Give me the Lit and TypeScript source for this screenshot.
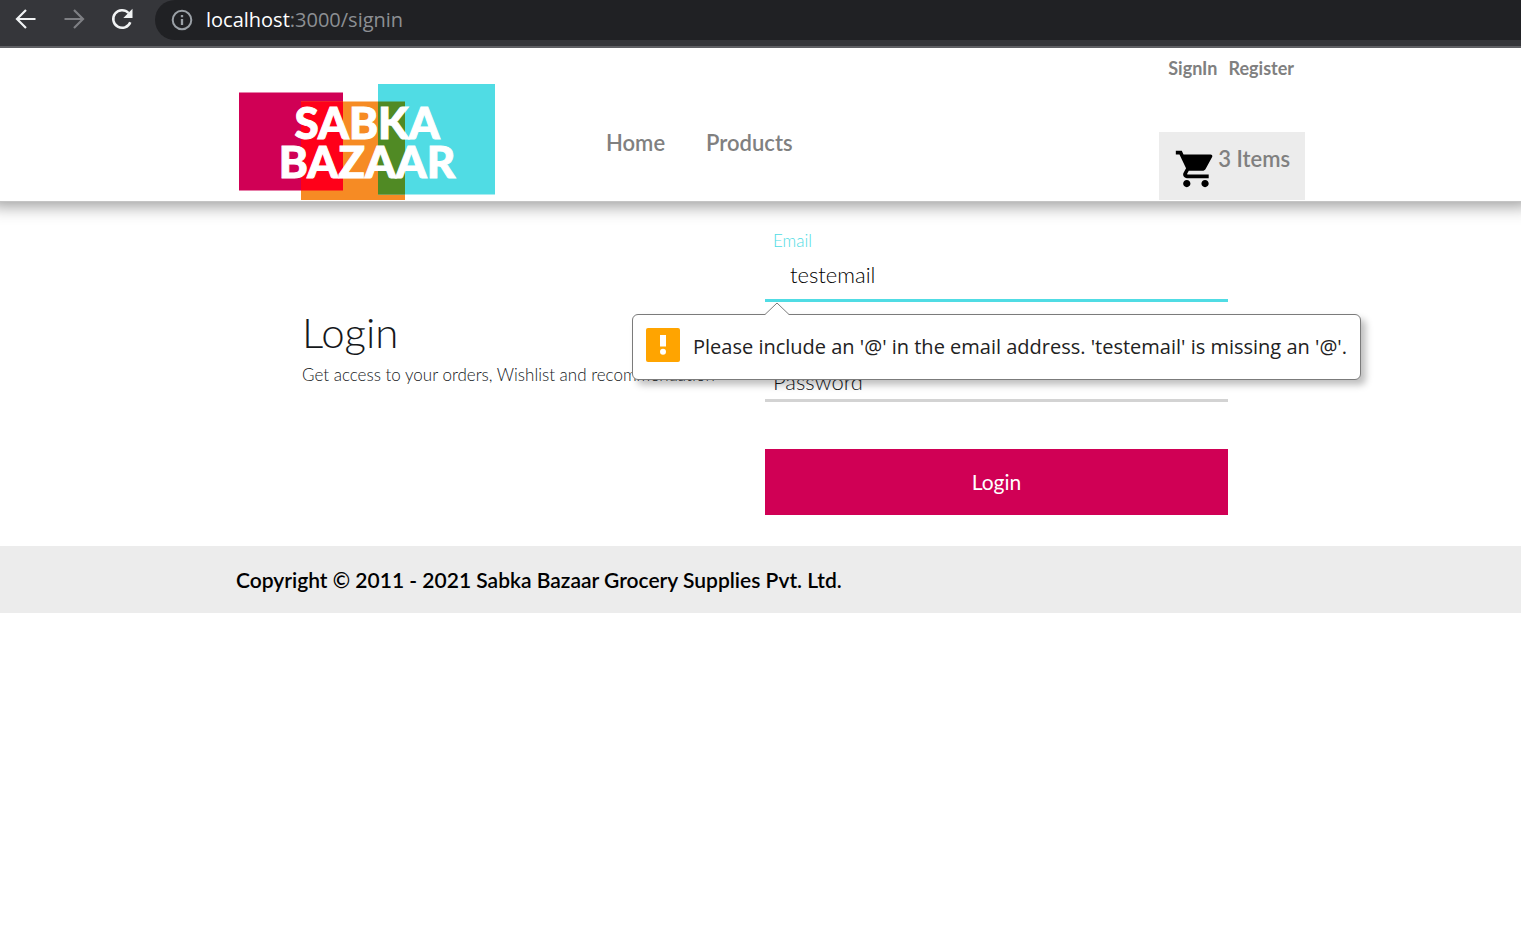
import { LitElement, html, css } from "lit";
import { customElement } from "lit/decorators.js";

@customElement("browser-bar")
class BrowserBar extends LitElement {
  static styles = css`
    :host {
      display: flex;
      align-items: flex-start;
      position: relative;
      z-index: 2;
      height: 46px;
      background: #35363a;
      border-bottom: 2px solid #5f6064;
      font-family: "Open Sans", "Noto Sans", sans-serif;
    }
    nav {
      display: flex;
      gap: 20px;
      padding: 5px 19px 0 12px;
    }
    button {
      width: 28px;
      height: 28px;
      padding: 0;
      border: 0;
      background: none;
      color: #f1f3f4;
    }
    button:disabled {
      color: #7e7f83;
    }
    svg {
      display: block;
    }
    .address {
      flex: 1;
      display: flex;
      align-items: center;
      gap: 13px;
      height: 40px;
      box-sizing: border-box;
      padding-left: 16px;
      border-radius: 20px 0 0 20px;
      background: #202124;
      color: #9aa0a6;
      font-size: 20px;
      line-height: 28px;
    }
    .host {
      color: #fff;
    }
    .path {
      color: #8c8f93;
    }
  `;
  render() {
    return html`
      <nav aria-label="Browser">
        <button aria-label="Back">
          <svg width="28" height="28" viewBox="0 0 28 28" fill="none" stroke="currentColor" stroke-width="2.2">
            <path d="M23.500 14H5.500M14 5L5 14l9 9" />
          </svg>
        </button>
        <button aria-label="Forward" disabled>
          <svg width="28" height="28" viewBox="0 0 28 28" fill="none" stroke="currentColor" stroke-width="2.2">
            <path d="M4.500 14h18M14 5l9 9-9 9" />
          </svg>
        </button>
        <button aria-label="Reload">
          <svg width="28" height="28" viewBox="0 0 28 28" fill="none" stroke="currentColor" stroke-width="2.5">
            <path d="M22.300 17.200A8.800 8.800 0 1 1 20.500 8" />
            <path d="M24.500 3.800v9.200h-9.200z" fill="currentColor" stroke="none" />
          </svg>
        </button>
      </nav>
      <div class="address">
        <svg width="22" height="22" viewBox="0 0 22 22" fill="none" stroke="currentColor" stroke-width="2">
          <circle cx="11" cy="11" r="9.300" />
          <path d="M11 10v6M11 6v2.300" stroke-width="2.300" />
        </svg>
        <span><span class="host">localhost</span><span class="path">:3000/signin</span></span>
      </div>
    `;
  }
}

@customElement("site-header")
class SiteHeader extends LitElement {
  static styles = css`
    :host {
      display: flex;
      justify-content: space-between;
      position: relative;
      height: 153px;
      padding: 0 216px 0 239px;
      background: #fff;
      border-bottom: 1px solid #c4c4c4;
      box-shadow: 0 -6px 16px 10px rgba(0, 0, 0, 0.4);
    }
    a {
      color: #808080;
      text-decoration: none;
    }
    .start {
      display: flex;
      gap: 111px;
    }
    .logo {
      margin-top: 36px;
    }
    .logo svg,
    .cart svg {
      display: block;
    }
    .logo text {
      font: 900 44px/1 Lato, sans-serif;
      fill: #fff;
      stroke: #fff;
      stroke-width: 1px;
    }
    .menu {
      display: flex;
      gap: 41px;
      padding-top: 80px;
      font-size: 22px;
      line-height: 30px;
      font-weight: 600;
    }
    .end {
      display: flex;
      flex-direction: column;
      justify-content: space-between;
      align-items: flex-end;
      padding-bottom: 1px;
    }
    .account {
      display: flex;
      gap: 11px;
      padding: 8px 11px 0 0;
      font-size: 18px;
      line-height: 24px;
      font-weight: 700;
    }
    .cart {
      display: flex;
      gap: 2px;
      height: 68px;
      box-sizing: border-box;
      padding: 12px 15px 0;
      border: 0;
      background: #ececec;
      color: #808080;
      font: 600 22px/30px Lato, sans-serif;
      white-space: nowrap;
    }
  `;
  render() {
    return html`
      <div class="start">
        <a class="logo" href="#" aria-label="Sabka Bazaar">
          <svg width="256" height="116" viewBox="0 0 256 116">
            <path fill="#d00055" d="M0 8.500h104V106.500H0z" />
            <path fill="#f68b24" d="M62 17.500h104V116H62z" />
            <path fill="#50dce4" d="M139 0h117v110.500H139z" />
            <path fill="#ff0019" d="M62 17.500h42V106.500H62z" />
            <path fill="#508a24" d="M139 17.500h27v93h-27z" />
            <text x="128" y="55" text-anchor="middle">SABKA</text>
            <text x="128" y="94" text-anchor="middle">BAZAAR</text>
          </svg>
        </a>
        <nav class="menu" aria-label="Main">
          <a href="#">Home</a>
          <a href="#">Products</a>
        </nav>
      </div>
      <div class="end">
        <nav class="account" aria-label="Account">
          <a href="#">SignIn</a>
          <a href="#">Register</a>
        </nav>
        <button class="cart">
          <svg width="42" height="50" viewBox="0 0 23 24" fill="#000">
            <path
              d="M7 18c-1.100 0-1.990.9-1.990 2S5.900 22 7 22s2-.9 2-2-.9-2-2-2zM1 2v2h2l3.600 7.590-1.350 2.450c-.16.28-.25.61-.25.960 0 1.100.9 2 2 2h12v-2H7.420c-.14 0-.25-.11-.25-.25l.03-.12.9-1.630h7.450c.75 0 1.410-.41 1.750-1.030l3.580-6.490A1 1 0 0 0 20.010 4H5.210l-.94-2H1zm16 16c-1.100 0-1.990.9-1.990 2s.89 2 1.990 2 2-.9 2-2-.9-2-2-2z"
            />
          </svg>
          <span>3 Items</span>
        </button>
      </div>
    `;
  }
}

@customElement("login-page")
class LoginPage extends LitElement {
  static styles = css`
    :host {
      display: grid;
      grid-template-columns: 1fr 463px;
      padding: 26px 293px 31px 302px;
      color: #15181b;
      font-weight: 300;
    }
    h1 {
      margin: 76px 0 0;
      font-size: 42px;
      line-height: 56px;
      font-weight: 300;
    }
    p {
      margin: 0;
      font-size: 17px;
      line-height: 30px;
      white-space: nowrap;
    }
    form {
      display: flex;
      flex-direction: column;
    }
    .field {
      display: grid;
      position: relative;
    }
    input {
      min-width: 0;
      box-sizing: border-box;
      border: 0;
      border-bottom: 3px solid #d3d3d3;
      border-radius: 0;
      outline: 0;
      background: none;
      color: #000;
      font: inherit;
    }
    .email label {
      padding-left: 8px;
      color: #50dce4;
      font-size: 17px;
      line-height: 26px;
    }
    .email input {
      height: 48px;
      padding: 0 25px 4px;
      border-color: #50dce4;
      font-size: 22px;
    }
    .password label,
    .password input {
      grid-area: 1 / 1;
    }
    .password label {
      align-self: end;
      padding: 0 8px 5px;
      font-size: 22px;
      line-height: 30px;
    }
    .password input {
      height: 100px;
    }
    .submit {
      height: 66px;
      margin-top: 47px;
      border: 0;
      background: #d00055;
      color: #fff;
      font: 400 21px/30px Lato, sans-serif;
    }
    .hint {
      display: flex;
      align-items: center;
      gap: 13px;
      position: absolute;
      z-index: 1;
      top: calc(100% + 12px);
      left: -133px;
      height: 66px;
      box-sizing: border-box;
      padding: 0 13px;
      border: 1px solid #7b7b7b;
      border-radius: 6px;
      background: #fff;
      box-shadow: 5px 5px 7px rgba(0, 0, 0, 0.25);
      color: #222;
      font: 400 20px/30px "Open Sans", "Noto Sans", sans-serif;
      white-space: nowrap;
    }
    .hint svg {
      flex: none;
    }
    .arrow {
      position: absolute;
      left: 132px;
      top: -13px;
    }
    .mark {
      margin-top: -5px;
    }
  `;
  render() {
    return html`
      <section>
        <h1>Login</h1>
        <p>Get access to your orders, Wishlist and recommendation</p>
      </section>
      <form novalidate>
        <div class="field email">
          <label for="email">Email</label>
          <input id="email" type="email" value="testemail" aria-describedby="email-hint" />
          <div class="hint" id="email-hint" role="alert">
            <svg class="arrow" width="24" height="14" viewBox="0 0 24 14">
              <path d="M0 14V12.500L12 1l12 11.500V14z" fill="#fff" />
              <path d="M0 12.500L12 1l12 11.500" fill="none" stroke="#7b7b7b" />
            </svg>
            <svg class="mark" width="34" height="34" viewBox="0 0 34 34">
              <rect width="34" height="34" rx="2" fill="#ffa400" />
              <path d="M14 7h6v11.500h-6z" fill="#fff" />
              <circle cx="17" cy="23.700" r="3" fill="#fff" />
            </svg>
            <span>Please include an '@' in the email address. 'testemail' is missing an '@'.</span>
          </div>
        </div>
        <div class="field password">
          <label for="password">Password</label>
          <input id="password" type="password" />
        </div>
        <button class="submit" type="button">Login</button>
      </form>
    `;
  }
}

@customElement("app-root")
class AppRoot extends LitElement {
  static styles = css`
    :host {
      display: block;
      min-height: 100vh;
      overflow-x: hidden;
      background: #fff;
      font-family: Lato, sans-serif;
    }
    footer {
      padding: 19px 236px 18px;
      background: #ececec;
      color: #000;
      font-size: 21px;
      line-height: 30px;
      font-weight: 600;
    }
  `;
  render() {
    return html`
      <browser-bar></browser-bar>
      <site-header></site-header>
      <login-page></login-page>
      <footer>Copyright © 2011 - 2021 Sabka Bazaar Grocery Supplies Pvt. Ltd.</footer>
    `;
  }
}
